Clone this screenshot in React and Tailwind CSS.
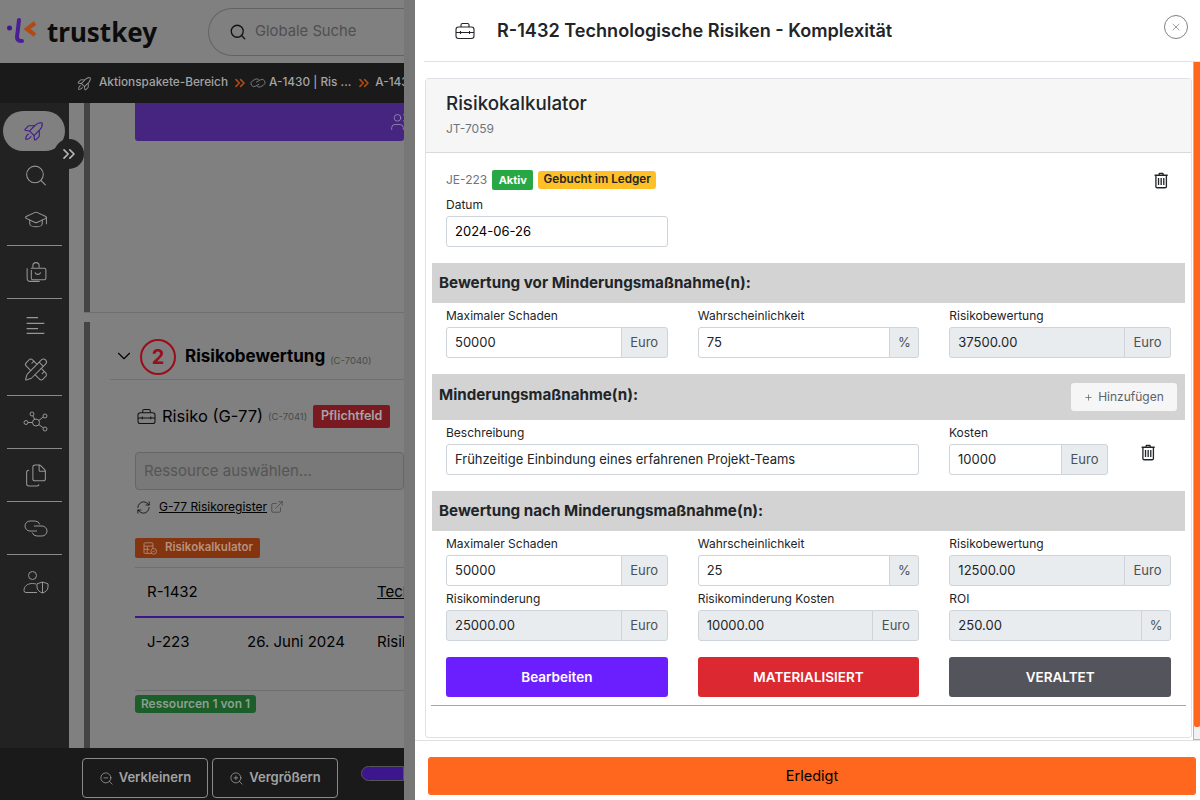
import React from 'react';
import {
  Search, GraduationCap, PencilRuler, Files, ChevronDown, ChevronsRight,
  RefreshCw, ExternalLink, ZoomIn, ZoomOut, Users, X, Plus,
} from 'lucide-react';
import { PiRocketLaunchLight } from 'react-icons/pi';
import { LiaTrashAltSolid } from 'react-icons/lia';

const Logo = () => (
  <svg width="30" height="30" viewBox="0 0 30 30" fill="none">
    <circle cx="3.500" cy="11" r="2.500" fill="#3f1a8c" />
    <path d="M13 3 L11 20 Q11 24 16 24" stroke="#4a1f96" strokeWidth="4" strokeLinecap="round" />
    <path d="M29 6 L21 12 L29 18" stroke="#b04a14" strokeWidth="4.200" />
  </svg>
);

const ToolboxIcon = ({ className }) => (
  <svg className={className} viewBox="0 0 20 18" fill="none" stroke="currentColor" strokeWidth="1.100">
    <path d="M6 5V3a1.500 1.500 0 0 1 1.500-1.500h5A1.500 1.500 0 0 1 14 3v2" />
    <rect x="1" y="5" width="18" height="11.500" rx="2.500" />
    <path d="M1 10.500h18M5.500 9v3M14.500 9v3" />
  </svg>
);

const BagIcon = ({ className }) => (
  <svg className={className} viewBox="0 0 24 24" fill="none" stroke="currentColor" strokeWidth="1">
    <path d="M9 7.500V5.500a3 3 0 0 1 6 0v2" />
    <path d="M7 8h13a1.500 1.500 0 0 1 1.500 1.500v8a1.500 1.500 0 0 1-1.500 1.500H9a1.500 1.500 0 0 1-1.500-1.500v-8" />
    <path d="M3.500 8v9.500a3 3 0 0 0 3 3h9" />
    <path d="M11 12a3 3 0 0 0 5.500 0" />
  </svg>
);

const NetworkIcon = ({ className }) => (
  <svg className={className} viewBox="0 0 26 24" fill="none" stroke="currentColor" strokeWidth="1">
    <circle cx="13" cy="12" r="3.500" />
    <circle cx="9" cy="3.500" r="2" />
    <circle cx="22" cy="5.500" r="2" />
    <circle cx="3" cy="12" r="2" />
    <circle cx="22" cy="18.500" r="2" />
    <path d="M10 5.500l1.700 3.400M20.200 6.500l-4.400 3.500M5 12h4.500M20.300 17.300l-4.500-3.200" />
  </svg>
);

const UserShieldIcon = ({ className }) => (
  <svg className={className} viewBox="0 0 26 24" fill="none" stroke="currentColor" strokeWidth="1">
    <circle cx="9.500" cy="6" r="4" />
    <path d="M14 23H3a2 2 0 0 1-2-2c0-4 3-7 8.500-7 1.500 0 2.500.2 3.500.6" />
    <path d="M19.500 12.500l5.500 1.800v3.200c0 3-2.500 5-5.500 6-3-1-5.500-3-5.500-6v-3.200z" />
    <path d="M19.500 12.500v11" />
  </svg>
);

const LinesIcon = ({ className }) => (
  <svg className={className} viewBox="0 0 24 24" fill="none" stroke="currentColor" strokeWidth="1.300">
    <path d="M3 4.500h11M3 10h17M3 15h11M3 19.500h17" />
  </svg>
);

const ChainIcon = ({ className }) => (
  <svg className={className} viewBox="0 0 26 20" fill="none" stroke="currentColor" strokeWidth="1">
    <path d="M14 12.500H7a5 5 0 0 1 0-10h5a5 5 0 0 1 4.800 3.500" />
    <path d="M11 7.500h8a5 5 0 0 1 0 10h-5a5 5 0 0 1-4.800-3.500" />
  </svg>
);

const CalcIcon = ({ className }) => (
  <svg className={className} viewBox="0 0 18 16" fill="none" stroke="currentColor" strokeWidth="1">
    <rect x="1" y="1" width="11" height="13" rx="1" />
    <path d="M1 5h11M1 9h7M5 5v9" />
    <circle cx="13" cy="11.500" r="3.500" fill="#84340f" />
    <path d="M11.500 11.500l1 1 2-2" />
  </svg>
);

const navGroups = [
  [Search, GraduationCap],
  [BagIcon],
  [LinesIcon, PencilRuler],
  [NetworkIcon],
  [Files],
  [ChainIcon],
  [UserShieldIcon],
];

const Sidebar = () => (
  <div className="relative flex w-[69px] shrink-0 flex-col bg-[#222222] pt-2">
    <div className="ml-[3px] flex h-10 w-[62px] items-center justify-center rounded-[20px] bg-[#808080] text-[#3f1a8c]">
      <PiRocketLaunchLight size={24} />
    </div>
    <div className="absolute left-[54px] top-[36px] flex h-[30px] w-[30px] items-center justify-center rounded-full bg-[#222222] text-[#b5b5b5]">
      <ChevronsRight size={20} strokeWidth={2} />
    </div>
    <div className="mt-[2px]">
      {navGroups.map((group, i) => (
        <div key={i}>
          {i > 0 && <div className="mx-[7px] my-1 h-px bg-[#8a8a8a]" />}
          {group.map((Icon, j) => (
            <div key={j} className="flex h-11 items-center justify-center pl-[2px]">
              <Icon className="h-[25px] w-[26px] text-[#969696]" strokeWidth={1} />
            </div>
          ))}
        </div>
      ))}
    </div>
  </div>
);

const LeftPage = () => (
  <div className="flex h-full w-[404px] shrink-0 flex-col overflow-hidden bg-[#808080] text-black">
    <div className="flex h-[63px] shrink-0 items-center">
      <div className="ml-[6px]"><Logo /></div>
      <span className="ml-[11px] w-[161px] font-['Noto_Sans'] text-[26px] font-bold leading-none text-[#0c0c0c]">trustkey</span>
      <div className="flex h-[48px] flex-1 items-center rounded-l-[24px] border border-r-0 border-[#636363] pl-5">
        <Search size={18} strokeWidth={1.700} className="text-[#111111]" />
        <span className="ml-[8px] whitespace-nowrap text-[14.800px] text-[#4f4f4f]">Globale Suche</span>
      </div>
    </div>

    <div className="flex h-10 shrink-0 items-center whitespace-nowrap bg-[#1a1a1a] pl-[76px] text-[11.800px] font-medium text-[#a3a3a3]">
      <PiRocketLaunchLight size={17} className="shrink-0" />
      <span className="ml-[6px]">Aktionspakete-Bereich</span>
      <ChevronsRight size={16} strokeWidth={2.500} className="ml-[4px] shrink-0 text-[#b04a14]" />
      <ChainIcon className="ml-[2px] h-[14px] w-[16px] shrink-0 -rotate-[30deg]" />
      <span className="ml-[3px]">A-1430 | Ris ...</span>
      <ChevronsRight size={16} strokeWidth={2.500} className="ml-[5px] shrink-0 text-[#b04a14]" />
      <span className="ml-[3px]">A-143</span>
    </div>

    <div className="flex min-h-0 flex-1">
      <Sidebar />
      <div className="flex min-w-0 flex-1 flex-col pl-[15px]">
        <div className="flex h-[210px] shrink-0 border-b border-[#6f6f6f]">
          <div className="w-[6px] bg-[#444444]" />
          <div className="flex-1 pl-[45px]">
            <div className="flex h-[38px] items-center justify-end rounded-b-[3px] bg-[#45257f] text-[#9a8cb8]">
              <Users size={20} strokeWidth={1} className="mr-[-6px]" />
            </div>
          </div>
        </div>

        <div className="mt-[9px] flex min-h-0 flex-1">
          <div className="w-[6px] bg-[#444444]" />
          <div className="min-w-0 flex-1 pl-5">
            <div className="flex h-[58px] items-end border-b border-[#6f6f6f] pb-[4px]">
              <ChevronDown size={22} strokeWidth={1.200} className="mb-[8px] ml-[3px]" />
              <div className="ml-[5px] flex h-9 w-9 shrink-0 items-center justify-center rounded-full border-2 border-[#9a0d1a] text-[20px] font-bold text-[#9a0d1a]">2</div>
              <span className="mb-[7px] ml-[9px] text-[17px] font-bold leading-6 whitespace-nowrap">Risikobewertung</span>
              <span className="mb-[7px] ml-[5px] text-[9.500px] text-[#4a4a4a]">(C-7040)</span>
            </div>

            <div className="pl-[25px]">
              <div className="mt-[24px] flex items-center whitespace-nowrap">
                <ToolboxIcon className="ml-[2px] h-[17px] w-[19px] text-[#111111]" />
                <span className="ml-[6px] text-[16.500px] leading-6">Risiko (G-77)</span>
                <span className="ml-[5px] mt-[3px] text-[9.500px] text-[#4a4a4a]">(C-7041)</span>
                <span className="ml-[6px] flex h-[23px] w-[77px] items-center justify-center rounded-[2px] bg-[#7a1a20] text-[12.500px] font-semibold text-[#a5a5a5]">Pflichtfeld</span>
              </div>
              <div className="mt-[24px] flex h-[38px] items-center rounded-[4px] border border-[#666666] bg-[#797979] pl-2 text-[15px] whitespace-nowrap text-[#555555]">Ressource auswählen...</div>
              <div className="mt-[8px] flex items-center">
                <RefreshCw size={15} strokeWidth={1.200} className="ml-[1px]" />
                <span className="ml-[8px] whitespace-nowrap text-[12px] underline">G-77 Risikoregister </span>
                <ExternalLink size={14} strokeWidth={1} className="ml-[3px] text-[#333333]" />
              </div>
              <div className="mt-[22px] flex h-5 w-[125px] items-center rounded-[2px] bg-[#84340f] pl-2 text-[11.500px] font-semibold whitespace-nowrap text-[#b5917f]">
                <CalcIcon className="h-[13px] w-[15px] shrink-0" />
                <span className="ml-[7px]">Risikokalkulator</span>
              </div>
              <div className="mt-[9px] flex h-[49px] items-center whitespace-nowrap border-t border-[#6f6f6f] pl-3 text-[15px]">
                <span className="w-[230px] shrink-0">R-1432</span>
                <span className="underline">Tech</span>
              </div>
              <div className="flex h-[75px] items-start whitespace-nowrap border-t-2 border-b border-t-[#3c168c] border-b-[#6f6f6f] pl-3 pt-[13px] text-[15px]">
                <span className="w-[100px] shrink-0">J-223</span>
                <span className="w-[130px] shrink-0">26. Juni 2024</span>
                <span>Risik</span>
              </div>
              <div className="mt-[4px] flex h-[18px] w-[121px] items-center justify-center rounded-[3px] bg-[#1b5e2a] text-[12px] font-semibold whitespace-nowrap text-[#8d9f8f]">Ressourcen 1 von 1</div>
            </div>
          </div>
        </div>
      </div>
    </div>

    <div className="flex h-[52px] shrink-0 items-end bg-[#1a1a1a] pb-[2px] pl-[82px] text-[13px] font-semibold text-[#a3a3a3]">
      <div className="flex h-10 w-[126px] items-center justify-center gap-[5px] rounded-[4px] border border-[#8a8a8a]">
        <ZoomOut size={15} strokeWidth={1.200} />Verkleinern
      </div>
      <div className="ml-1 flex h-10 w-[126px] items-center justify-center gap-[5px] rounded-[4px] border border-[#8a8a8a]">
        <ZoomIn size={15} strokeWidth={1.200} />Vergrößern
      </div>
      <div className="mb-[17px] ml-[23px] h-[15px] flex-1 rounded-l-full border border-[#555555] bg-[#3c168c]" />
    </div>
  </div>
);

const Field = ({ label, value, unit, disabled }) => (
  <div className="min-w-0 flex-1">
    <div className="mb-[2px] pt-px text-[12px] leading-[18px] text-[#212529]">{label}</div>
    <div className="flex h-[31px] text-[13px]">
      <div className={`flex min-w-0 flex-1 items-center rounded-l-[3px] border border-[#ced4da] pl-2 text-[#212529] ${disabled ? 'bg-[#e9ecef]' : 'bg-white'}`}>{value}</div>
      <div className={`-ml-px flex shrink-0 items-center justify-center rounded-r-[3px] border border-[#ced4da] bg-[#e9ecef] text-[#495057] ${unit === '%' ? 'w-[30px]' : 'w-[47px]'}`}>{unit}</div>
    </div>
  </div>
);

const SectionBar = ({ children, right, className }) => (
  <div className={`mx-[6px] flex items-center justify-between bg-[#d3d3d3] pl-[7px] pr-[8px] text-[15.200px] font-bold text-[#212529] ${className}`}>
    <span>{children}</span>
    {right}
  </div>
);

const Trash = ({ className }) => <LiaTrashAltSolid size={21} className={`text-[#212529] ${className}`} />;

const ActionButton = ({ bg, children }) => (
  <div className={`flex h-10 flex-1 items-center justify-center rounded-[3px] text-[13.500px] font-semibold text-white ${bg}`}>{children}</div>
);

const Card = () => (
  <div className="h-[660px] rounded-[3px] border border-[#dee2e6] bg-white">
    <div className="h-[74px] border-b border-[#d9d9d9] bg-[#f6f6f6] pl-5 pt-[13px]">
      <div className="text-[18.750px] font-medium leading-6 text-[#212529]">Risikokalkulator</div>
      <div className="mt-[6px] text-[12px] leading-[14px] text-[#6c757d]">JT-7059</div>
    </div>

    <div className="flex h-[37px] items-start justify-between pl-5 pr-5 pt-[17px]">
      <div className="flex h-[20px] items-center">
        <span className="text-[12px] text-[#6c757d]">JE-223</span>
        <span className="ml-[5px] flex h-5 w-[41px] items-center justify-center rounded-[2px] bg-[#28a745] text-[11px] font-bold text-white">Aktiv</span>
        <span className="ml-[5px] flex h-[18px] w-[118px] items-center justify-center rounded-[3px] bg-[#ffc027] text-[11.700px] font-semibold whitespace-nowrap text-[#212529]">Gebucht im Ledger</span>
      </div>
      <Trash />
    </div>
    <div className="mt-[6px] pl-5">
      <div className="mb-[2px] text-[12px] leading-[18px] text-[#212529]">Datum</div>
      <div className="flex h-[31px] w-[222px] items-center rounded-[3px] border border-[#ced4da] pl-2 text-[13px] text-black">2024-06-26</div>
    </div>

    <SectionBar className="mt-[16px] h-10">Bewertung vor Minderungsmaßnahme(n):</SectionBar>
    <div className="mt-[3px] flex gap-[30px] px-5">
      <Field label="Maximaler Schaden" value="50000" unit="Euro" />
      <Field label="Wahrscheinlichkeit" value="75" unit="%" />
      <Field label="Risikobewertung" value="37500.00" unit="Euro" disabled />
    </div>

    <SectionBar
      className="mt-[16px] h-[46px]"
      right={
        <div className="flex h-[28px] w-[106px] items-center justify-center gap-[5px] rounded-[3px] bg-[#f6f6f6] text-[12px] font-normal text-[#5c636a]">
          <Plus size={9} />Hinzufügen
        </div>
      }
    >
      <span className="relative -top-[2px]">Minderungsmaßnahme(n):</span>
    </SectionBar>
    <div className="mt-[3px] flex gap-[30px] pl-5 pr-[21px]">
      <div className="w-[473px] shrink-0">
        <div className="mb-[2px] pt-px text-[12px] leading-[18px] text-[#212529]">Beschreibung</div>
        <div className="flex h-[31px] items-center rounded-[3px] border border-[#ced4da] pl-2 text-[13px] text-[#212529]">Frühzeitige Einbindung eines erfahrenen Projekt-Teams</div>
      </div>
      <div className="w-[159px] shrink-0">
        <Field label="Kosten" value="10000" unit="Euro" />
      </div>
      <Trash className="mt-[19px] -ml-[1px]" />
    </div>

    <SectionBar className="mt-[16px] h-10">Bewertung nach Minderungsmaßnahme(n):</SectionBar>
    <div className="mt-[3px] flex gap-[30px] px-5">
      <Field label="Maximaler Schaden" value="50000" unit="Euro" />
      <Field label="Wahrscheinlichkeit" value="25" unit="%" />
      <Field label="Risikobewertung" value="12500.00" unit="Euro" disabled />
    </div>
    <div className="mt-[3px] flex gap-[30px] px-5">
      <Field label="Risikominderung" value="25000.00" unit="Euro" disabled />
      <Field label="Risikominderung Kosten" value="10000.00" unit="Euro" disabled />
      <Field label="ROI" value="250.00" unit="%" disabled />
    </div>

    <div className="mt-4 flex gap-[30px] px-5">
      <ActionButton bg="bg-[#6b1fff]">Bearbeiten</ActionButton>
      <ActionButton bg="bg-[#dc2830]">MATERIALISIERT</ActionButton>
      <ActionButton bg="bg-[#54545c]">VERALTET</ActionButton>
    </div>
    <div className="mx-[5px] mt-2 h-px bg-[#a6a6a6]" />
  </div>
);

const Drawer = () => (
  <div className="flex h-full min-w-0 flex-1 flex-col bg-white">
    <div className="ml-[9px] flex h-[62px] shrink-0 items-center border-b border-[#dfe1e4] pl-[31px]">
      <ToolboxIcon className="h-[18px] w-[20px] text-[#212529]" />
      <span className="ml-[22px] whitespace-nowrap text-[18.100px] font-semibold text-[#212529]">R-1432 Technologische Risiken - Komplexität</span>
      <div className="mb-[7px] ml-auto mr-[12px] flex h-6 w-6 items-center justify-center rounded-full border border-[#808080] text-[#808080]">
        <X size={12} strokeWidth={1.500} />
      </div>
    </div>
    <div className="flex h-[679px] shrink-0 border-b border-[#dfe1e4] pl-[10px]">
      <div className="min-w-0 flex-1 pt-4">
        <Card />
      </div>
      <div className="ml-[1px] h-full w-[7px] shrink-0 border-b border-l border-[#b5b5b5] bg-[#f1f1f1]">
        <div className="h-[665px] rounded-b-[2px] bg-[#ff671f]" />
      </div>
    </div>
    <div className="flex flex-1 items-start pl-[13px] pr-1 pt-4">
      <div className="flex h-[38px] flex-1 items-center justify-center rounded-[3px] bg-[#ff671f] text-[14.500px] text-black">Erledigt</div>
    </div>
  </div>
);

export default function App() {
  return (
    <div className="flex h-[800px] w-[1200px] overflow-hidden font-['Inter',sans-serif]">
      <LeftPage />
      <div className="h-full w-[11px] shrink-0 bg-[#777777]" />
      <Drawer />
    </div>
  );
}
